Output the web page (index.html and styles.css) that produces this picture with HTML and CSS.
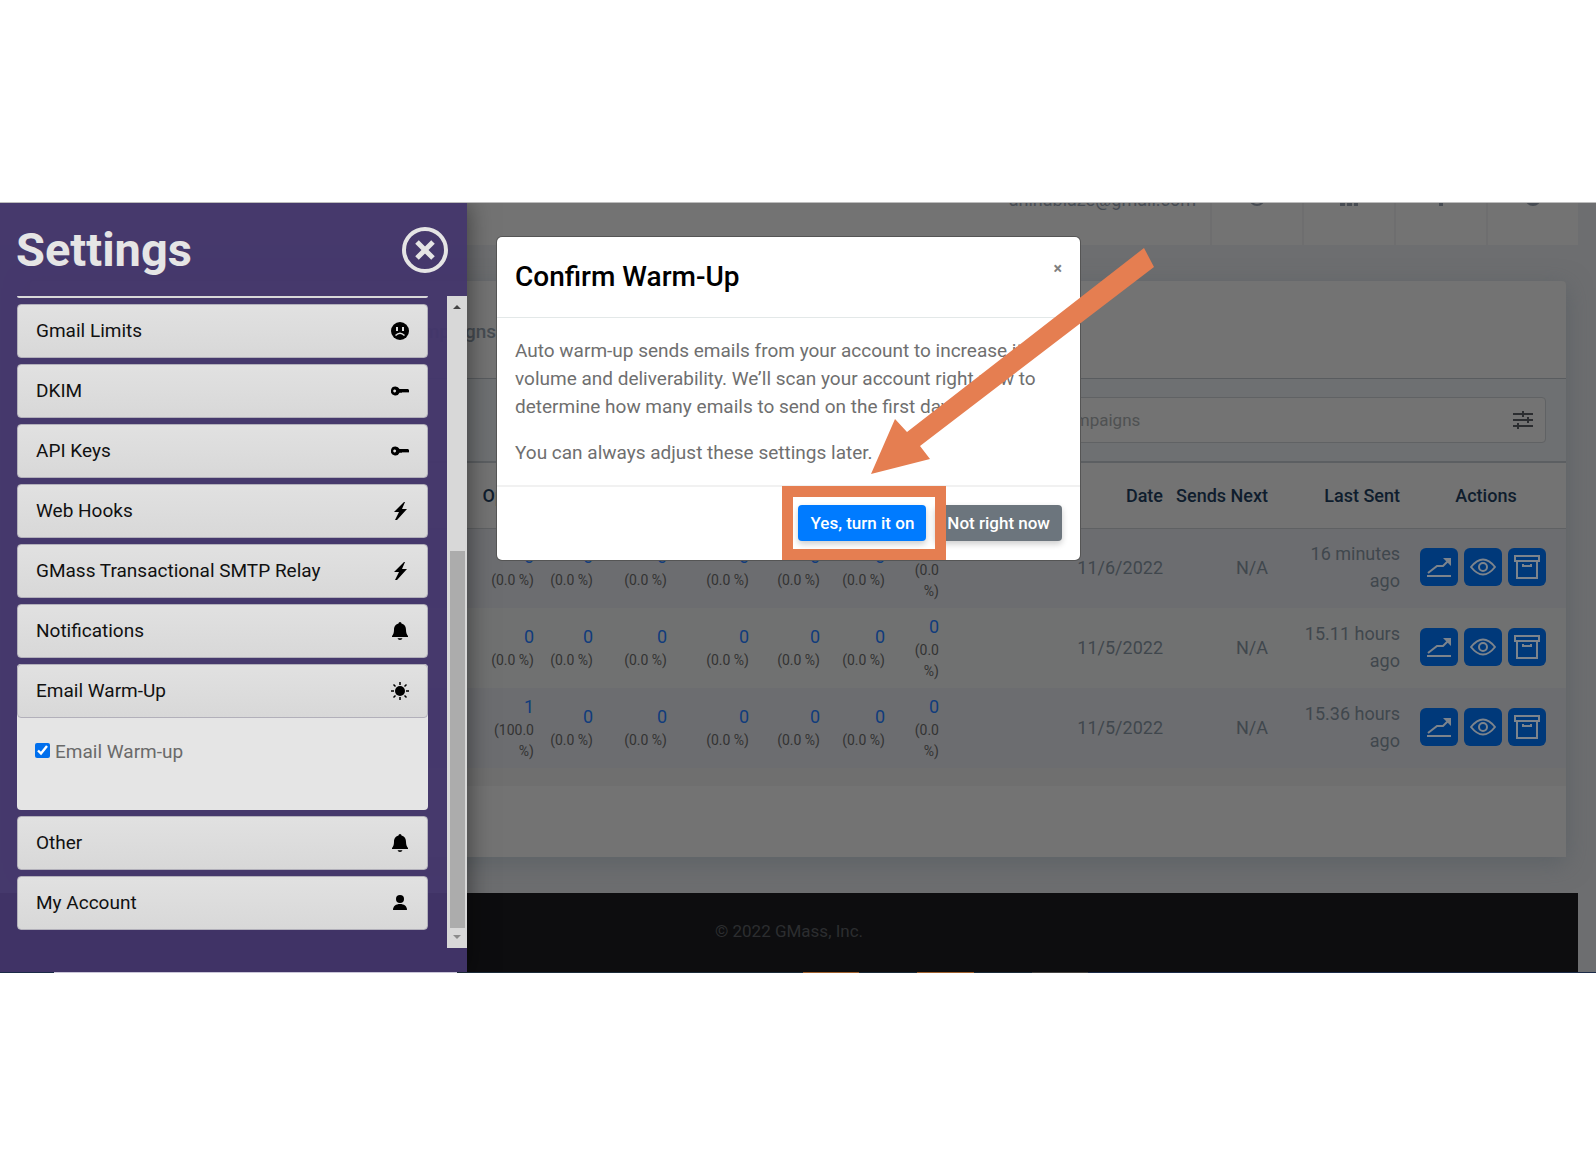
FILE: index.html
```
<!DOCTYPE html>
<html lang="en">
<head>
    <meta charset="UTF-8">
    <meta name="viewport" content="width=device-width, initial-scale=1.0">
    <title>GMass Settings</title>
    <link rel="stylesheet" href="styles.css">
</head>
<body>
    <!-- shared icons -->
    <svg class="sprite" aria-hidden="true">
        <symbol id="i-chart" viewBox="0 0 26 26"><path d="M2 19l9-7h6l5-5" fill="none" stroke="currentColor" stroke-width="2"/><path d="M17 4h8v8l-3-3-2-2zM1 21h24v2H1z"/></symbol>
        <symbol id="i-eye" viewBox="0 0 26 26"><path d="M1 13q12-15 24 0q-12 15-24 0z" fill="none" stroke="currentColor" stroke-width="2"/><circle cx="13" cy="13" r="4" fill="none" stroke="currentColor" stroke-width="2"/></symbol>
        <symbol id="i-box" viewBox="0 0 26 26"><path d="M1 2h24v5H1zM3 7v17h20V7M9 10v2h8v-2" fill="none" stroke="currentColor" stroke-width="2"/></symbol>
        <symbol id="i-key" viewBox="0 0 18 18"><path fill-rule="evenodd" d="M4.500 4.500a4.500 4.500 0 0 1 4 2.500H17l1 1v2l-1 .8-1-.8-1 .8-1-.8-1 .8-1-.8-1 .8H8.500a4.500 4.500 0 1 1-4-6.300zM3.600 7.600a1.400 1.400 0 1 0 .1 0z"/></symbol>
        <symbol id="i-bolt" viewBox="0 0 18 18"><path d="M13 0L3 10h5L4 18l2 0L16 7h-5l3-7z"/></symbol>
        <symbol id="i-bell" viewBox="0 0 18 18"><path d="M9 0q1.500 0 1.500 1.500C14 2.500 15 5 15 8c0 3 1 5 2 6v1H1v-1c1-1 2-3 2-6 0-3 1-5.500 4.500-6.500Q7.500 0 9 0zM6.500 16.300h5Q11 18 9 18t-2.500-1.700z"/></symbol>
    </svg>

    <div class="app">
        <div class="page">
            <header class="topbar">
                <div class="topbar-inner">
                    <span class="user-mail">aninablaze@gmail.com</span>
                    <a class="top-link" href="#" aria-label="Help"><svg viewBox="0 0 18 18"><circle cx="9" cy="8" r="7" fill="none" stroke="currentColor" stroke-width="2"/></svg></a>
                    <a class="top-link" href="#" aria-label="Apps"><svg viewBox="0 0 18 18"><path d="M0 0h5v4H0zM7 0h5v4H7zM14 0h4v4h-4zM0 6h5v4H0zM7 6h5v4H7zM14 6h4v4h-4zM0 12h5v4H0zM7 12h5v4H7zM14 12h4v4h-4z"/></svg></a>
                    <a class="top-link" href="#" aria-label="Notifications"><svg viewBox="0 0 18 18"><path d="M9 0l5 5v7H4V5zM7 12h4v4H7z"/></svg></a>
                    <a class="top-link" href="#" aria-label="Settings"><svg viewBox="0 0 18 18"><circle cx="9" cy="8" r="6" fill="none" stroke="currentColor" stroke-width="4"/></svg></a>
                </div>
            </header>

            <main class="card">
                <h2 class="card-title">Campaigns</h2>
                <div class="card-search">
                    <div class="search-box">
                        <input type="text" placeholder="Search Campaigns" aria-label="Search Campaigns">
                        <button class="filter" aria-label="Filter"><svg viewBox="0 0 20 18"><path d="M0 2h20v2H0zM0 8h20v2H0zM0 14h20v2H0zM9 0h2v6H9zM14 6h2v6h-2zM4 12h2v6H4z"/></svg></button>
                    </div>
                </div>
                <table class="campaigns">
                    <colgroup>
                        <col><col class="c-open"><col class="c-click"><col class="c-reply"><col class="c-bounce"><col class="c-block"><col class="c-unsub"><col class="c-over"><col class="c-date"><col class="c-next"><col class="c-last"><col class="c-act">
                    </colgroup>
                    <thead>
                        <tr>
                            <th></th><th>Opens</th><th></th><th></th><th></th><th></th><th></th><th></th>
                            <th>Date</th><th>Sends Next</th><th>Last Sent</th><th class="actions-head">Actions</th>
                        </tr>
                    </thead>
                    <tbody>
                        <tr>
                            <td></td>
                            <td><a href="#">0</a><small>(0.0 %)</small></td>
                            <td><a href="#">0</a><small>(0.0 %)</small></td>
                            <td><a href="#">0</a><small>(0.0 %)</small></td>
                            <td><a href="#">0</a><small>(0.0 %)</small></td>
                            <td><a href="#">0</a><small>(0.0 %)</small></td>
                            <td><a href="#">0</a><small>(0.0 %)</small></td>
                            <td><a href="#">0</a><small>(0.0<br>%)</small></td>
                            <td>11/6/2022</td><td>N/A</td><td>16 minutes<br>ago</td>
                            <td><div class="actions">
                                <button aria-label="Report"><svg><use href="#i-chart"/></svg></button>
                                <button aria-label="View"><svg><use href="#i-eye"/></svg></button>
                                <button aria-label="Archive"><svg><use href="#i-box"/></svg></button>
                            </div></td>
                        </tr>
                        <tr>
                            <td></td>
                            <td><a href="#">0</a><small>(0.0 %)</small></td>
                            <td><a href="#">0</a><small>(0.0 %)</small></td>
                            <td><a href="#">0</a><small>(0.0 %)</small></td>
                            <td><a href="#">0</a><small>(0.0 %)</small></td>
                            <td><a href="#">0</a><small>(0.0 %)</small></td>
                            <td><a href="#">0</a><small>(0.0 %)</small></td>
                            <td><a href="#">0</a><small>(0.0<br>%)</small></td>
                            <td>11/5/2022</td><td>N/A</td><td>15.11 hours<br>ago</td>
                            <td><div class="actions">
                                <button aria-label="Report"><svg><use href="#i-chart"/></svg></button>
                                <button aria-label="View"><svg><use href="#i-eye"/></svg></button>
                                <button aria-label="Archive"><svg><use href="#i-box"/></svg></button>
                            </div></td>
                        </tr>
                        <tr>
                            <td></td>
                            <td><a href="#">1</a><small>(100.0<br>%)</small></td>
                            <td><a href="#">0</a><small>(0.0 %)</small></td>
                            <td><a href="#">0</a><small>(0.0 %)</small></td>
                            <td><a href="#">0</a><small>(0.0 %)</small></td>
                            <td><a href="#">0</a><small>(0.0 %)</small></td>
                            <td><a href="#">0</a><small>(0.0 %)</small></td>
                            <td><a href="#">0</a><small>(0.0<br>%)</small></td>
                            <td>11/5/2022</td><td>N/A</td><td>15.36 hours<br>ago</td>
                            <td><div class="actions">
                                <button aria-label="Report"><svg><use href="#i-chart"/></svg></button>
                                <button aria-label="View"><svg><use href="#i-eye"/></svg></button>
                                <button aria-label="Archive"><svg><use href="#i-box"/></svg></button>
                            </div></td>
                        </tr>
                    </tbody>
                </table>
                <div class="card-gap"></div>
                <div class="card-footer"></div>
            </main>

            <footer class="footer">© 2022 GMass, Inc.</footer>
        </div>

        <!-- settings drawer -->
        <aside class="drawer">
            <div class="drawer-head">
                <h1>Settings</h1>
                <button class="drawer-close" aria-label="Close settings"><svg viewBox="0 0 46 46"><circle cx="23" cy="23" r="21" fill="none" stroke="currentColor" stroke-width="4"/><path d="M15 15l16 16M31 15L15 31" stroke="currentColor" stroke-width="5"/></svg></button>
            </div>
            <div class="drawer-body">
                <div class="menu">
                    <div class="menu-clip"></div>
                    <button class="item">Gmail Limits <svg viewBox="0 0 18 18"><circle cx="9" cy="9" r="9"/><path d="M6 5v4M12 5v4" stroke="#dcdcdc" stroke-width="2"/><path d="M4.500 13.500q4.500-4.500 9 0" fill="none" stroke="#dcdcdc" stroke-width="1.500"/></svg></button>
                    <button class="item">DKIM <svg><use href="#i-key"/></svg></button>
                    <button class="item">API Keys <svg><use href="#i-key"/></svg></button>
                    <button class="item">Web Hooks <svg><use href="#i-bolt"/></svg></button>
                    <button class="item">GMass Transactional SMTP Relay <svg><use href="#i-bolt"/></svg></button>
                    <button class="item">Notifications <svg><use href="#i-bell"/></svg></button>
                    <div class="group">
                        <button class="item">Email Warm-Up <svg viewBox="0 0 18 18"><circle cx="9" cy="9" r="5"/><path d="M9 0v3M9 15v3M0 9h3M15 9h3M2.500 2.500l2 2M13.500 13.500l2 2M15.500 2.500l-2 2M4.500 13.500l-2 2" stroke="currentColor" stroke-width="1.500"/></svg></button>
                        <div class="panel">
                            <input type="checkbox" id="warmup" checked>
                            <label for="warmup">Email Warm-up</label>
                        </div>
                    </div>
                    <button class="item">Other <svg><use href="#i-bell"/></svg></button>
                    <button class="item">My Account <svg viewBox="0 0 18 18"><circle cx="9" cy="5" r="4"/><path d="M2 16c0-4 3-6 7-6s7 2 7 6z"/></svg></button>
                </div>
                <div class="scrollbar">
                    <svg viewBox="0 0 8 4"><path d="M0 4l4-4 4 4z"/></svg>
                    <div class="thumb"></div>
                    <svg class="down" viewBox="0 0 8 4"><path d="M0 0l4 4 4-4z"/></svg>
                </div>
            </div>
        </aside>

        <!-- confirm dialog -->
        <div class="modal" role="dialog" aria-labelledby="modal-title">
            <div class="modal-head">
                <h3 id="modal-title">Confirm Warm-Up</h3>
                <button class="modal-close" aria-label="Close">×</button>
            </div>
            <div class="modal-body">
                <p>Auto warm-up sends emails from your account to increase its volume and deliverability. We’ll scan your account right now to determine how many emails to send on the first day.</p>
                <p>You can always adjust these settings later.</p>
            </div>
            <div class="modal-foot">
                <button class="btn btn-primary">Yes, turn it on</button>
                <button class="btn btn-secondary">Not right now</button>
            </div>
        </div>

        <!-- callout over the dialog -->
        <div class="callout-frame"></div>
        <svg class="callout-arrow" viewBox="0 0 283 227"><path d="M0 226L24 171 36 184 273 0 283 19 49 198 59 211z"/></svg>

        <div class="taskbar"></div>
    </div>
</body>
</html>
```
FILE: styles.css
```
* {
    box-sizing: border-box;
}

body {
    margin: 0;
    padding-top: 202px;
    background-color: #ffffff;
    font-family: Roboto, "Liberation Sans", sans-serif;
    font-size: 18px;
    line-height: 27px;
}

button {
    font-family: inherit;
    border: none;
    padding: 0;
    cursor: pointer;
}

svg {
    display: block;
    fill: currentColor;
}

h1, h2, h3, p {
    margin: 0;
}

.sprite {
    position: absolute;
    width: 0;
    height: 0;
}

.app {
    position: relative;
    overflow: hidden;
    border-top: 1px solid #bdbdbd;
}

/* dimmed page */
.page {
    background-color: #6d6e70;
    color: #33393f;
}

.topbar {
    display: flex;
    align-items: flex-end;
    height: 42px;
    margin-right: 18px;
    overflow: hidden;
    background-color: #737373;
}

.topbar-inner {
    display: flex;
    flex: 1;
    justify-content: flex-end;
    align-items: center;
    height: 92px;
    flex-shrink: 0;
    color: #474c53;
}

.user-mail {
    padding-right: 14px;
}

.top-link {
    display: flex;
    align-items: center;
    justify-content: center;
    width: 92px;
    height: 92px;
    border-left: 2px solid #6e6e6f;
    color: #474c53;
}

.top-link svg {
    width: 18px;
    height: 18px;
}

.card {
    margin: 36px 30px;
    background-color: #737373;
    border-radius: 4px 4px 0 0;
    box-shadow: 0 6px 24px rgba(75, 85, 92, 0.5);
}

.card-title {
    height: 97px;
    padding: 37px 0 0 370px;
    font-size: 19px;
    font-weight: 500;
    line-height: 27px;
    color: #464c52;
}

.card-search {
    padding: 18px 20px 18px 955px;
    background-color: #6e7072;
    border-top: 1px solid #595c5f;
    border-bottom: 2px solid #5c5f62;
}

.search-box {
    display: flex;
    align-items: center;
    height: 46px;
    padding: 0 12px;
    background-color: #737373;
    border: 1px solid #606264;
    border-radius: 4px;
}

.search-box input {
    flex: 1;
    min-width: 0;
    padding: 0;
    border: none;
    background: none;
    font-family: inherit;
    font-size: 17px;
}

.search-box input::placeholder {
    color: #4f5152;
}

.filter {
    background: none;
    color: #2b2d30;
}

.filter svg {
    width: 20px;
    height: 18px;
}

.campaigns {
    width: 100%;
    table-layout: fixed;
    border-collapse: collapse;
    text-align: right;
}

.c-open { width: 70px; }
.c-click { width: 59px; }
.c-reply { width: 74px; }
.c-bounce { width: 82px; }
.c-block { width: 71px; }
.c-unsub { width: 65px; }
.c-over { width: 54px; }
.c-date { width: 224px; }
.c-next { width: 105px; }
.c-last { width: 132px; }
.c-act { width: 156px; }

.campaigns th {
    height: 65px;
    padding: 0 10px 0 0;
    font-weight: 500;
    color: #0f1d2d;
    white-space: nowrap;
    border-bottom: 1px solid #5f6163;
}

.campaigns .actions-head {
    padding: 0 4px 0 0;
    text-align: center;
}

.campaigns td {
    height: 80px;
    padding: 0 10px 2px 0;
    color: #40474d;
}

.campaigns tbody tr:nth-child(odd) {
    background-color: #6c6d70;
}

.campaigns tbody tr:nth-child(even) {
    background-color: #707171;
}

.campaigns a {
    display: block;
    color: #103c7c;
    text-decoration: none;
}

.campaigns small {
    display: block;
    font-size: 14px;
    line-height: 21px;
    color: #333333;
}

.actions {
    display: flex;
    justify-content: flex-end;
    gap: 6px;
    padding-right: 10px;
}

.actions button {
    display: flex;
    align-items: center;
    justify-content: center;
    width: 38px;
    height: 38px;
    border-radius: 6px;
    background-color: #00397a;
    color: #7d848c;
}

.actions svg {
    width: 26px;
    height: 26px;
}

.card-gap {
    height: 18px;
    background-color: #6f6f6f;
}

.card-footer {
    height: 71px;
}

.footer {
    height: 80px;
    margin-right: 18px;
    padding: 25px 0;
    background-color: #0d0d0f;
    color: #2c2d30;
    font-size: 17px;
    text-align: center;
}

/* settings drawer */
.drawer {
    position: absolute;
    top: 0;
    bottom: 0;
    left: 0;
    width: 467px;
    background-color: rgba(67, 54, 107, 0.95);
    box-shadow: 0 0 24px rgba(0, 0, 0, 0.5);
}

.drawer-head {
    display: flex;
    align-items: center;
    justify-content: space-between;
    height: 93px;
    padding: 0 19px 0 16px;
    color: #e5e5e5;
}

.drawer-head h1 {
    font-size: 47px;
    font-weight: 700;
    line-height: 56px;
}

.drawer-close {
    background: none;
    color: #e5e5e5;
}

.drawer-close svg {
    width: 46px;
    height: 46px;
}

.drawer-body {
    display: flex;
    justify-content: space-between;
}

.menu {
    display: flex;
    flex-direction: column;
    flex: 1;
    gap: 6px;
    padding: 0 19px 18px 17px;
}

.menu-clip {
    height: 2px;
    background-color: #d9d9d9;
    border-radius: 0 0 4px 4px;
}

.item {
    display: flex;
    align-items: center;
    justify-content: space-between;
    width: 100%;
    height: 54px;
    padding: 0 18px 1px 18px;
    border: 1px solid #b2b0ba;
    border-radius: 4px;
    background: linear-gradient(#e1e1e1, #d8d8d8);
    color: #111111;
    font-size: 19px;
    line-height: 27px;
}

.item svg {
    width: 18px;
    height: 18px;
    color: #000000;
}

.group {
    border-radius: 4px;
    background-color: #e5e5e5;
}

.panel {
    display: flex;
    align-items: flex-start;
    gap: 5px;
    height: 92px;
    padding: 20px 18px;
    color: #6a6a6a;
    font-size: 19px;
}

.panel input {
    width: 15px;
    height: 15px;
    margin: 5px 0 0;
    accent-color: #006fed;
}

.scrollbar {
    display: flex;
    flex-direction: column;
    align-items: center;
    justify-content: space-between;
    width: 20px;
    padding: 9px 0;
    background-color: #d8d8d8;
    color: #444444;
}

.scrollbar svg {
    width: 8px;
    height: 4px;
}

.scrollbar .down {
    color: #8b8b8b;
}

.thumb {
    width: 15px;
    height: 377px;
    margin: auto 0 7px;
    background-color: #acacac;
}

/* dialog */
.modal {
    position: absolute;
    top: 34px;
    left: 497px;
    width: 583px;
    background-color: #ffffff;
    border-radius: 5px;
    box-shadow: 0 0 0 1px #555555;
    color: #6f6f6f;
}

.modal-head {
    display: flex;
    align-items: flex-start;
    justify-content: space-between;
    padding: 24px 18px;
    border-bottom: 1px solid #e3e8e8;
}

.modal-head h3 {
    font-size: 28px;
    font-weight: 500;
    line-height: 32px;
    color: #000000;
}

.modal-close {
    background: none;
    color: #808080;
    font-size: 16px;
    font-weight: 700;
    line-height: 16px;
}

.modal-body {
    padding: 19px 18px 18px;
    font-size: 19px;
    line-height: 28px;
}

.modal-body p + p {
    margin-top: 18px;
}

.modal-foot {
    display: flex;
    justify-content: flex-end;
    gap: 9px;
    padding: 18px 18px 19px;
    border-top: 2px solid #f1f1f1;
}

.btn {
    height: 36px;
    padding: 0 12px;
    border-radius: 4px;
    color: #ffffff;
    font-size: 17px;
    font-weight: 500;
    box-shadow: 0 3px 6px rgba(0, 0, 0, 0.2);
}

.btn-primary {
    background-color: #007bff;
}

.btn-secondary {
    background-color: #6c757d;
}

.callout-frame {
    position: absolute;
    top: 283px;
    left: 782px;
    width: 164px;
    height: 74px;
    border: 11px solid #e57e51;
}

.callout-arrow {
    position: absolute;
    top: 45px;
    left: 871px;
    width: 283px;
    height: 227px;
    color: #e57e51;
}

.taskbar {
    position: absolute;
    right: 0;
    bottom: 0;
    left: 0;
    height: 1px;
    background: linear-gradient(90deg, #1b2b48 54px, #c9c5d8 54px, #c9c5d8 457px, #1b2b38 457px, #1b2b38 803px, #a0612f 803px, #a0612f 859px, #1b2b38 859px, #1b2b38 917px, #a0612f 917px, #a0612f 974px, #1b2b38 974px, #1b2b38 1032px, #444444 1032px, #444444 1088px, #1b2b48 1088px);
}
```
